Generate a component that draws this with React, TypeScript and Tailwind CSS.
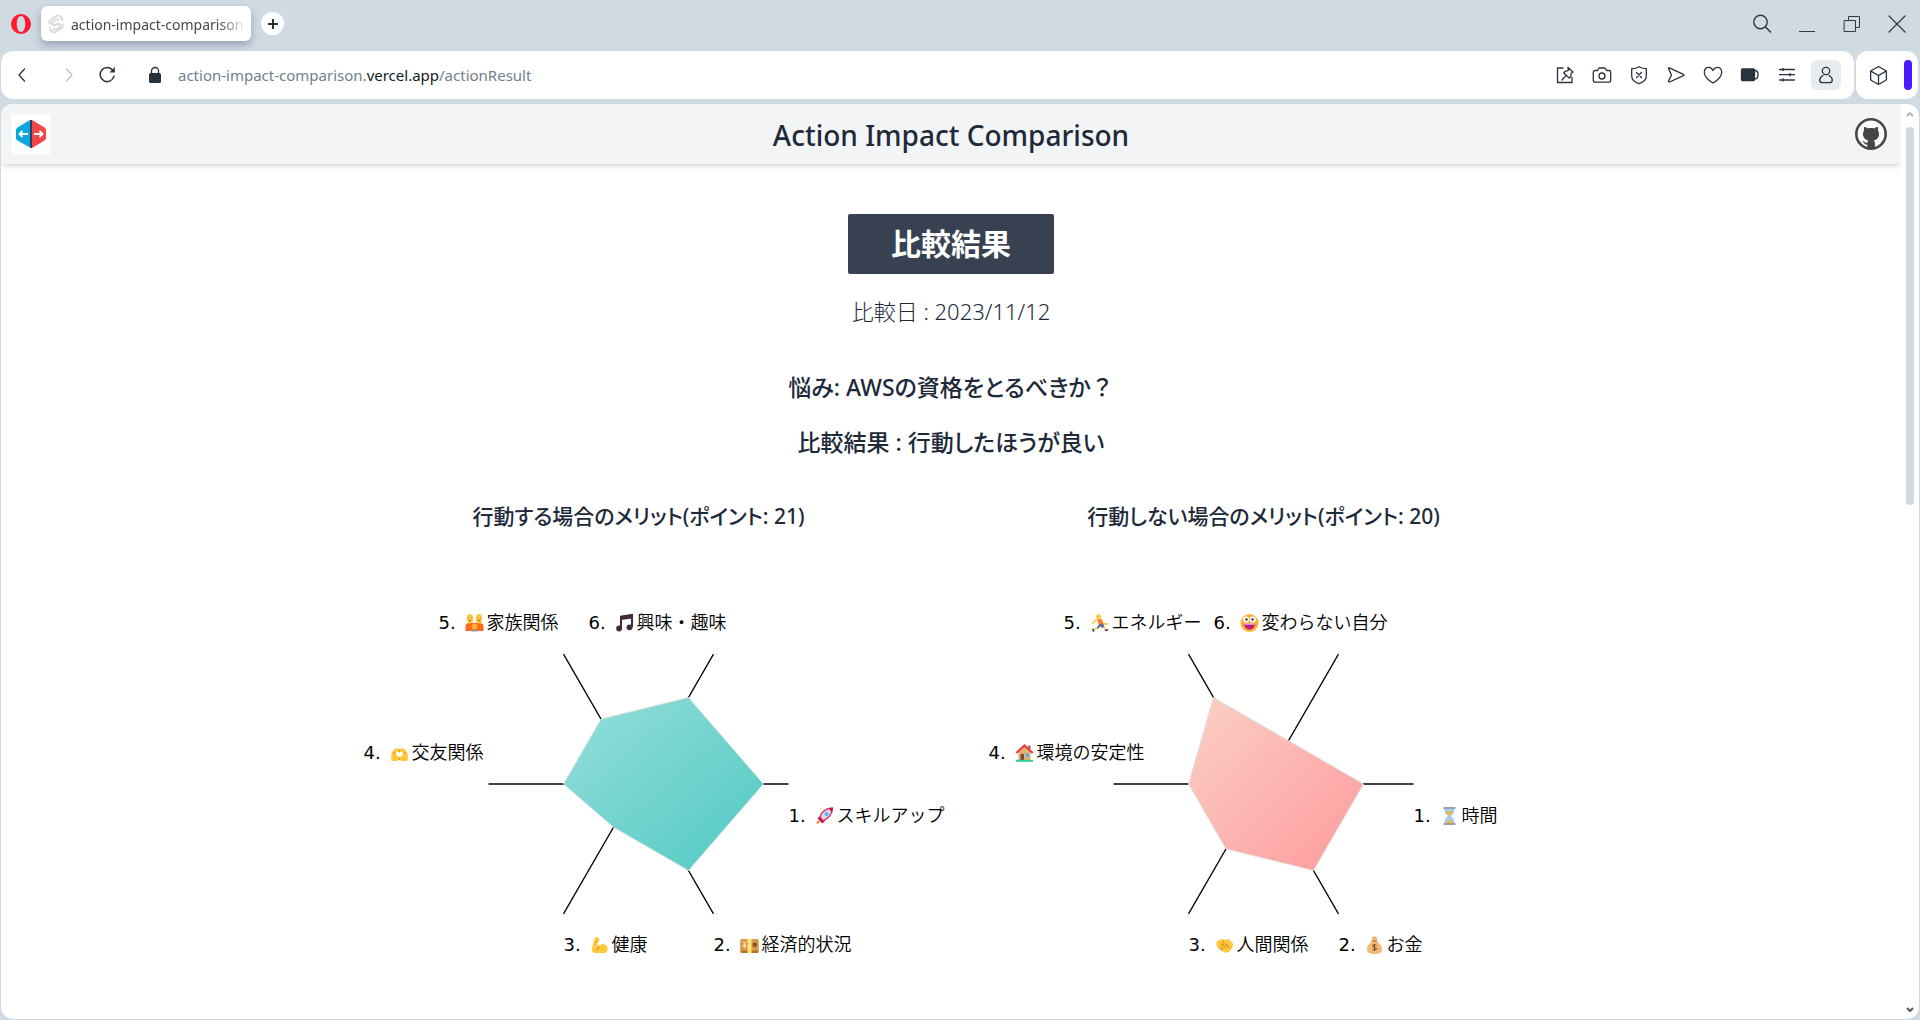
import type { ReactNode } from "react";
import { FiBox } from "react-icons/fi";

type IconProps = { children: ReactNode; className?: string };

function LineIcon({ children, className = "size-5" }: IconProps) {
  return (
    <svg
      viewBox="0 0 20 20"
      className={className}
      fill="none"
      stroke="currentColor"
      strokeWidth="1.3"
      strokeLinecap="round"
      strokeLinejoin="round"
      aria-hidden="true"
    >
      {children}
    </svg>
  );
}

function TitleBar() {
  return (
    <div className="flex h-[51px] items-start justify-between">
      <div className="flex items-start">
        <button aria-label="Opera menu" className="ml-[9px] mt-3 flex size-6 items-center justify-center">
          <svg viewBox="0 0 20 20" className="size-5">
            <path
              fillRule="evenodd"
              fill="#ff1b2d"
              d="M10 0a10 10 0 1 0 0 20 10 10 0 0 0 0-20Zm0 2c2.500 0 4.200 3.400 4.200 8s-1.700 8-4.200 8-4.200-3.400-4.200-8S7.500 2 10 2Z"
            />
          </svg>
        </button>
        <div className="ml-2 mt-[6px] flex h-[35px] w-[210px] items-center rounded-md bg-white pl-[6px] pr-[5px] shadow-[0_4px_9px_rgba(40,60,80,0.35)]">
          <svg viewBox="0 0 20 22" className="h-[20px] w-[18px] shrink-0" fill="none" stroke="#d9dcdf" strokeWidth="2.2" aria-hidden="true">
            <path d="M16.500 7.800c.6-1.600.3-3.300-.9-4.600C14 1.500 11.600 1.400 9.800 2.500L5 5.600C3 6.900 2.200 9.200 3.100 11.400M3.500 14.200c-.6 1.600-.3 3.300.9 4.600 1.600 1.700 4 1.800 5.800.7l4.800-3.100c2-1.300 2.800-3.600 1.900-5.800" />
            <path d="M13.500 7.500c-.4-1.700-2-2.300-3.500-1.400L6.500 8.300c-1.800 1.300-1 4.200 1.500 4.100 1.500-.1 2.700-1.500 4.200-1.600 2.400 0 3.200 2.800 1.400 4.100L10 17c-1.500.8-3.200.2-3.500-1.500" />
          </svg>
          <span className="ml-[6px] flex-1 overflow-hidden whitespace-nowrap pt-px text-[14px] text-[#44494d] [mask-image:linear-gradient(to_right,black_85%,transparent)]">
            action-impact-comparison
          </span>
        </div>
        <button aria-label="New tab" className="ml-[10px] mt-3 flex size-[23px] items-center justify-center rounded-full bg-white text-[#29333d]">
          <svg viewBox="0 0 10 10" className="size-[10px]" stroke="currentColor" strokeWidth="2">
            <path d="M5 0v10M0 5h10" />
          </svg>
        </button>
      </div>
      <div className="mr-[13px] mt-[14px] flex gap-[25px] text-[#33383d]">
        <button aria-label="Search tabs">
          <LineIcon>
            <circle cx="8.500" cy="8" r="6.700" strokeWidth="1.400" />
            <path d="m13.500 13 5 5" strokeWidth="1.600" />
          </LineIcon>
        </button>
        <button aria-label="Minimize">
          <LineIcon>
            <path d="M2 17.500h16" strokeLinecap="butt" strokeWidth="1" />
          </LineIcon>
        </button>
        <button aria-label="Restore">
          <LineIcon>
            <path d="M2.500 6.500h11v11h-11zM6.500 6.500v-4h11v11h-4" strokeWidth="1" strokeLinejoin="miter" />
          </LineIcon>
        </button>
        <button aria-label="Close">
          <LineIcon>
            <path d="m2 2 16 16M18 2 2 18" strokeWidth="1.200" />
          </LineIcon>
        </button>
      </div>
    </div>
  );
}

function Toolbar() {
  return (
    <div className="flex h-12 gap-[2px] pl-px pr-[2px]">
      <nav aria-label="Browser toolbar" className="flex min-w-0 flex-1 items-center rounded-xl bg-white pl-[11px] pr-[13px] text-[#29333d]">
        <button aria-label="Back">
          <LineIcon>
            <path d="M12.500 4 7 10l5.500 6" />
          </LineIcon>
        </button>
        <button aria-label="Forward" className="ml-[27px] text-[#b8bec4]">
          <LineIcon>
            <path d="m7.500 4 5.500 6-5.500 6" />
          </LineIcon>
        </button>
        <button aria-label="Reload" className="ml-[18px]">
          <LineIcon>
            <path d="M15.800 5.400A7 7 0 1 0 17 11.200" strokeWidth="1.500" />
            <path d="M17.600 2.800v4.400h-4.400Z" fill="currentColor" strokeWidth=".5" />
          </LineIcon>
        </button>
        <svg viewBox="0 0 14 18" className="ml-[31px] h-[18px] w-[14px]" aria-hidden="true">
          <path d="M3.500 8V5a3.500 3.500 0 0 1 7 0v3" fill="none" stroke="currentColor" strokeWidth="1.300" />
          <rect x="1" y="7" width="12" height="10" rx="1.500" fill="currentColor" />
        </svg>
        <a href="#top" className="ml-4 min-w-0 flex-1 truncate pt-px text-[15px] text-[#73808d]">
          action-impact-comparison.<span className="text-[#111a22]">vercel.app</span>/actionResult
        </a>
        <div className="flex items-center gap-[17px]">
          <button aria-label="Easy files">
            <LineIcon>
              <path d="M8 3H2.500v14.500h14.500V12.500" />
              <path d="m13 2.500 5 4.500-2 1.500-.2 3.300-1.600 1.200-5.400-5 1.400-1.700 3-.7ZM11.300 10.400 7 15" />
            </LineIcon>
          </button>
          <button aria-label="Snapshot">
            <LineIcon>
              <path d="M3 5.500h2.500L7 3h6l1.500 2.500H17c1 0 1.700.7 1.700 1.700v8.300c0 1-.7 1.700-1.700 1.700H3c-1 0-1.700-.7-1.700-1.700V7.200c0-1 .7-1.700 1.700-1.700Z" />
              <circle cx="10" cy="11" r="3" />
            </LineIcon>
          </button>
          <button aria-label="Ad blocker">
            <LineIcon>
              <path d="M10 1.700c2.300 1.400 4.800 2 7.300 2V11c0 4-3.600 6.500-7.300 7.700C6.300 17.500 2.700 15 2.700 11V3.700c2.500 0 5-.6 7.300-2Z" />
              <path d="m7.500 7.500 5 5M12.500 7.500l-5 5" />
            </LineIcon>
          </button>
          <button aria-label="Send to My Flow">
            <LineIcon>
              <path d="M3.300 2.800 17.500 9.300c.6.300.6 1 0 1.300L3.500 17c-.6.300-1.200-.3-1-.9L5.500 10 2.500 3.600c-.2-.6.2-1 .8-.8Z" />
            </LineIcon>
          </button>
          <button aria-label="Bookmark">
            <LineIcon>
              <path d="M10 18C4.500 14.800 1.300 11 1.300 7.200 1.300 4 3.500 2.300 5.700 2.300c2 0 3.500 1.400 4.300 3.200.8-1.800 2.300-3.200 4.300-3.200 2.200 0 4.400 1.700 4.400 4.900 0 3.800-3.200 7.600-8.700 10.800Z" />
            </LineIcon>
          </button>
          <button aria-label="Battery saver">
            <LineIcon>
              <rect x="1.500" y="4" width="13" height="11.500" rx="1" fill="currentColor" />
              <path d="M15 5.500c2 0 3 1.300 3 4.300s-1 4.200-3 4.200" />
            </LineIcon>
          </button>
          <button aria-label="Easy setup">
            <LineIcon>
              <path d="M2.500 4.500h15M2.500 9.700h15M2.500 15h15" />
              <path d="M6 3.500v2M13 8.700v2M6 14v2" strokeWidth="1.500" />
            </LineIcon>
          </button>
          <button aria-label="Profile" className="-ml-[3px] flex size-[30px] items-center justify-center rounded-md bg-[#e7ecf0]">
            <LineIcon>
              <circle cx="10" cy="6" r="3.700" />
              <path d="M7 10.500c-2.100 1-3.300 2.700-3.300 4.500 0 2 1 2.700 2.800 2.700h7c1.800 0 2.800-.7 2.800-2.700 0-1.800-1.200-3.500-3.300-4.500" />
            </LineIcon>
          </button>
        </div>
      </nav>
      <div className="flex w-[62px] items-center justify-between rounded-xl bg-white pl-3 pr-[6px] text-[#29333d]">
        <button aria-label="Extensions">
          <FiBox className="size-[21px]" strokeWidth={1.5} />
        </button>
        <button aria-label="Aria" className="h-[30px] w-2 rounded-full bg-[#4b1bff]" />
      </div>
    </div>
  );
}

function SiteHeader() {
  return (
    <header className="flex h-[60px] items-center justify-between bg-[#f3f4f6] px-[10px] shadow-md">
      <a href="#home" aria-label="Home" className="flex size-10 items-center justify-center bg-[#fbfefd]">
        <svg viewBox="0 0 30 28" className="h-7 w-[30px]">
          <path d="M15 0v28L1.500 20.500Q0 19.500 0 18V10Q0 8.500 1.500 7.500L13 .6Q14 0 15 0Z" fill="#0ba5e0" />
          <path d="M15 0v28q1 0 2-.6L28.500 20.500Q30 19.500 30 18V10Q30 8.500 28.500 7.500L17 .6Q16 0 15 0Z" fill="#f24545" />
          <path d="M15 0v28" stroke="#1a2340" strokeWidth="1.400" />
          <path d="M12 14H3.500M6.500 11l-3 3 3 3M18 14h8.500M23.500 11l3 3-3 3" stroke="#fff" strokeWidth="1.800" fill="none" />
        </svg>
      </a>
      <h1 className="pt-[2px] text-[28px] font-medium text-gray-800">Action Impact Comparison</h1>
      <a href="#github" aria-label="GitHub" className="flex w-10 justify-center text-[#444746]">
        <svg viewBox="0 0 32 32" className="size-8">
          <circle cx="16" cy="16" r="14.700" fill="#fafafa" stroke="currentColor" strokeWidth="2.600" />
          <path
            fill="currentColor"
            d="M9.200 9c1.500 0 2.700.7 3.600 1.400 2-.6 4.400-.6 6.400 0C20.100 9.700 21.300 9 22.800 9c.4 1.300.4 2.500.1 3.600 2.800 4.200.3 9.300-4.100 9.800.7.700 1.100 1.600 1.100 2.700V30h-7.600v-3.400c-2.800.5-3.300-2-5-3l.2-.5c2 .1 2.200 2 4.900 1.700 0-1 .3-1.800.9-2.400-4.400-.5-7-5.600-4.200-9.800-.3-1.100-.3-2.300.1-3.600Z"
          />
        </svg>
      </a>
    </header>
  );
}

type Item = { name: string; value: number; icon: ReactNode };

const skin = "#ffc83d";

const rocket = (
  <>
    <path d="M2 11.500 4.500 9l5 5L7 16.500Z" fill="#c50f4f" />
    <path d="M4.500 10C6 5 10.500 1 17 1c0 6-4 11-9.500 12.800Z" fill="#d3dbe6" stroke="#e0245e" strokeWidth="1.300" />
    <path d="M13 1.500 17 1l-.5 4.500Z" fill="#c50f4f" />
    <circle cx="11" cy="7" r="2" fill="#5ab0f5" />
    <path d="M1 17c0-3 1-4 3-3.500.7 2-.4 3.200-3 3.500Z" fill="#ff8a3d" />
  </>
);
const banknote = (
  <>
    <rect x="0" y="4" width="18" height="13" rx="1" fill="#b5722e" />
    <rect x="0" y="3" width="18" height="11.500" rx="1" fill="#d99a4e" />
    <rect x="7" y="3" width="4" height="14" fill="#ffe27a" />
    <path d="m2.500 5.500 1.500 2 1.500-2M4 7.500V12M2.500 9h3M2.500 10.500h3" stroke="#ffe9c0" fill="none" />
    <circle cx="14.300" cy="8.800" r="2.200" fill="#8a4b1e" />
  </>
);
const muscle = (
  <>
    <path d="M4 2.500C5.500.5 8 1 8.500 2.500L9 5 6.800 6l.7 4.500c2-2.700 5.500-3.300 8-1.200 3 2.700 2 6.700-1.500 7.700H5c-3 0-4-2-3.500-5Z" fill={skin} />
    <path d="m7.500 10.500 1.300 1.700M5 5.800 6.800 6M6 14l2-2" stroke="#d67d00" fill="none" />
  </>
);
const heartHands = (
  <>
    <path d="M1 17C0 12 1 7 4 5c2-1.500 4-.8 5 .5C10 4.200 12 3.500 14 5c3 2 4 7 3 12h-5.500L9 15.500 6.500 17Z" fill={skin} />
    <path d="M9 13.500C6 11.500 5.500 10.500 5.500 9c0-1.500 2.500-2 3.500 0 1-2 3.500-1.500 3.500 0 0 1.500-.5 2.500-3.500 4.500Z" fill="#fff" />
    <path d="M9 4.800V8M2.500 9l2.500-.5M15.500 9 13 8.500M9 13.500v2.500" stroke="#e09a20" fill="none" />
  </>
);
const family = (
  <>
    <path d="M0 17v-5c0-2 1.500-3 4-3h10c2.500 0 4 1 4 3v5Z" fill="#ff6a1a" />
    <rect x="1.500" y="0" width="6" height="9.500" rx="3" fill={skin} />
    <rect x="10.500" y="0" width="6" height="9.500" rx="3" fill={skin} />
    <path d="M6 17.500v-2h6v2Z" fill="#8e9aa8" />
    <circle cx="9" cy="12.500" r="2.800" fill="#ffb52e" />
    <path d="M3 4h.5M5.500 4H6M12 4h.5M14.500 4h.5M3.500 6.500h2M12.500 6.500h2" stroke="#9a5a10" />
  </>
);
const note = (
  <>
    <path d="M5.500 14V2.500L16.500 1v12" fill="none" stroke="#402a38" strokeWidth="2" />
    <path d="M5 2.300 17 1v3.500L5 6Z" fill="#402a38" />
    <circle cx="3.600" cy="14.500" r="2.900" fill="#402a38" />
    <circle cx="14" cy="13.300" r="2.900" fill="#402a38" />
  </>
);
const hourglass = (
  <>
    <path d="M4 2h10c0 4-1.500 5.500-3.700 7 2.200 1.500 3.700 3 3.700 7H4c0-4 1.500-5.500 3.700-7C5.500 7.500 4 6 4 2Z" fill="#9bd0f5" />
    <path d="M5.500 4.500h7C12 6.500 10.500 7.500 9.300 8.500V13l3.700 3H5l3.700-3V8.500C7.500 7.500 6 6.500 5.500 4.500Z" fill="#ffb02e" />
    <path d="M3 1h12M3 17h12" stroke="#9aa3ad" strokeWidth="2" />
  </>
);
const moneyBag = (
  <>
    <path d="M6 1.500 9 0l3 1.500-1 3.500c3.500 2 5.500 5.500 5.500 8.500 0 3-2.500 4.500-7.500 4.500s-7.500-1.500-7.500-4.500C1.500 10.500 3.500 7 7 5Z" fill="#f3b878" />
    <path d="M6.300 5h5.400" stroke="#c47a3a" strokeWidth="1.300" />
    <path d="M11 9.300c-1-1-4-.8-4 .7s4 1 4 2.600-3 1.700-4 .6M9 8v7" stroke="#7a4a20" fill="none" />
  </>
);
const handshake = (
  <>
    <path d="M1 5.500 6 3l3 1 4-1 4.500 4.500c.3 3-.7 5.500-3.500 8L10.500 17 5 14C1.500 11.500.3 9 1 5.500Z" fill={skin} />
    <path d="M8.500 4.500 6 8.500c1 1 2.500.5 3.500-1l5 4M5 10l3 3M3.500 12l4 3M7.500 9l4 4M10 8.500l3 3" stroke="#d07a10" strokeWidth=".8" fill="none" />
  </>
);
const house = (
  <>
    <path d="M3 8 9 2l6 6v8H3Z" fill="#e0b070" />
    <path d="M12.500 1.500h2.500v4h-2.500Z" fill="#b06a50" />
    <path d="M.8 9 9 1.500 17.200 9" stroke="#f03a42" strokeWidth="2.200" fill="none" />
    <path d="M5 10h3.500v6.500H5Z" fill="#7a4a3a" />
    <path d="M10 9.500h3.500V13H10Z" fill="#5ab0f5" />
    <path d="M.5 16.800h17" stroke="#2fd08a" strokeWidth="2" />
  </>
);
const runner = (
  <>
    <circle cx="8" cy="2.800" r="2.500" fill={skin} />
    <path d="M7.500 6 3.500 7 2.500 9.500M11 7l2 3h3.500" stroke={skin} strokeWidth="1.800" fill="none" strokeLinecap="round" />
    <path d="M7 5.500 11.500 5l1 5L8.500 12Z" fill="#ff7a2e" />
    <path d="m8.500 10.500 4-1 1.500 3.500-2 1-2-1.500-3 2.500-1-1Z" fill="#5a6a9a" />
    <path d="m6 14-3.500 2M13 13l2.500 3" stroke={skin} strokeWidth="1.600" fill="none" />
    <path d="m2 15 1.500 2.500M14.500 16.500l3-.8" stroke="#4a3060" strokeWidth="1.600" />
  </>
);
const zany = (
  <>
    <circle cx="9" cy="9" r="9" fill="#ffb02e" />
    <circle cx="5.700" cy="5.500" r="3" fill="#fff" />
    <circle cx="12.300" cy="5.500" r="3" fill="#fff" />
    <circle cx="6" cy="5.500" r="1.200" fill="#402a32" />
    <circle cx="12" cy="5.500" r="1.200" fill="#402a32" />
    <path d="M3.500 9.500h11c0 3.500-2.300 6-5.500 6s-5.500-2.500-5.500-6Z" fill="#bb1d80" />
    <path d="M4 9.500h10v1H4Z" fill="#fff" />
  </>
);

const act: Item[] = [
  { name: "スキルアップ", value: 5, icon: rocket },
  { name: "経済的状況", value: 4, icon: banknote },
  { name: "健康", value: 2, icon: muscle },
  { name: "交友関係", value: 3, icon: heartHands },
  { name: "家族関係", value: 3, icon: family },
  { name: "興味・趣味", value: 4, icon: note },
];

const stay: Item[] = [
  { name: "時間", value: 4, icon: hourglass },
  { name: "お金", value: 4, icon: moneyBag },
  { name: "人間関係", value: 3, icon: handshake },
  { name: "環境の安定性", value: 3, icon: house },
  { name: "エネルギー", value: 4, icon: runner },
  { name: "変わらない自分", value: 2, icon: zany },
];

// Label anchors relative to the chart centre, clockwise from the right-hand axis.
const anchors = [
  [150, 38],
  [75, 167],
  [-75, 167],
  [-275, -25],
  [-200, -155],
  [-50, -155],
];

const RADIUS = 150;
const STEP = 25;

function point(index: number, distance: number): [number, number] {
  const angle = (index * Math.PI) / 3;
  return [Math.cos(angle) * distance, Math.sin(angle) * distance];
}

function RadarChart({ id, items, from, to }: { id: string; items: Item[]; from: string; to: string }) {
  return (
    <svg viewBox="-312.5 -224 625 424" className="w-full overflow-visible" role="img" aria-labelledby={`${id}-title`}>
      <defs>
        <linearGradient id={id} x1="0" y1="0" x2="1" y2="1">
          <stop offset="0" stopColor={from} />
          <stop offset="1" stopColor={to} />
        </linearGradient>
      </defs>
      {items.map((item, i) => {
        const [x, y] = point(i, RADIUS);
        return <line key={item.name} x1="0" y1="0" x2={x} y2={y} stroke="#000" strokeWidth="1.3" />;
      })}
      <polygon
        points={items.map((item, i) => point(i, item.value * STEP).join(",")).join(" ")}
        fill={`url(#${id})`}
        stroke="#dfe3e3"
      />
      {items.map((item, i) => (
        <g key={item.name} transform={`translate(${anchors[i][0]} ${anchors[i][1]})`}>
          <text className="text-[18px] [font-family:'DejaVu_Sans',sans-serif]">{i + 1}.</text>
          <g transform="translate(27 -15)">{item.icon}</g>
          <text x="48" className="text-[18px] font-[350] [font-feature-settings:normal]">
            {item.name}
          </text>
        </g>
      ))}
    </svg>
  );
}

function Result({ id, title, ...chart }: { id: string; title: string; items: Item[]; from: string; to: string }) {
  return (
    <section>
      <h3 id={`${id}-title`} className="text-center text-[21px] leading-8 font-medium">
        {title}
      </h3>
      <div className="mt-7">
        <RadarChart id={id} {...chart} />
      </div>
    </section>
  );
}

function ScrollBar() {
  return (
    <div className="flex w-[18px] flex-col items-center pt-[7px] pb-[6px]">
      <svg viewBox="0 0 8 6" className="h-[6px] w-2" fill="none" stroke="#b4b4b4" strokeWidth="1.800">
        <path d="m1 5 3-3 3 3" />
      </svg>
      <div className="mt-[10px] flex w-2 flex-1 flex-col">
        <div className="h-[43%] rounded-full bg-[#d0dae3]" />
      </div>
      <svg viewBox="0 0 8 6" className="h-[6px] w-2" fill="none" stroke="#555" strokeWidth="2">
        <path d="m1 1 3 3 3-3" />
      </svg>
    </div>
  );
}

export default function App() {
  return (
    <div className="flex h-screen flex-col bg-[#d0dae3] [font-family:'Noto_Sans','Noto_Sans_CJK_JP',sans-serif]">
      <TitleBar />
      <Toolbar />
      <div className="mt-[5px] mr-px mb-px ml-px flex min-h-0 flex-1 overflow-hidden rounded-xl bg-white">
        <div className="min-w-0 flex-1 overflow-hidden text-gray-800">
          <SiteHeader />
          <main className="flex flex-col items-center pt-[50px] text-center [font-feature-settings:'palt']">
            <h2 className="rounded-xs bg-[#374151] px-[43px] text-[30px] leading-[60px] font-bold text-white [font-feature-settings:normal]">
              比較結果
            </h2>
            <p className="mt-[19px] text-[22px] leading-9 font-light">比較日 : 2023/11/12</p>
            <p className="mt-10 text-[23px] leading-9 font-medium">
              悩み: AWSの資格をとるべきか<span className="[font-feature-settings:normal]">？</span>
            </p>
            <p className="mt-[19px] text-[23px] leading-9 font-medium">比較結果 : 行動したほうが良い</p>
            <div className="mt-10 grid w-full max-w-[1250px] grid-cols-2">
              <Result id="act" title="行動する場合のメリット(ポイント: 21)" items={act} from="#96deda" to="#50c9c3" />
              <Result id="stay" title="行動しない場合のメリット(ポイント: 20)" items={stay} from="#fad0c4" to="#ff9a9e" />
            </div>
          </main>
        </div>
        <ScrollBar />
      </div>
    </div>
  );
}
